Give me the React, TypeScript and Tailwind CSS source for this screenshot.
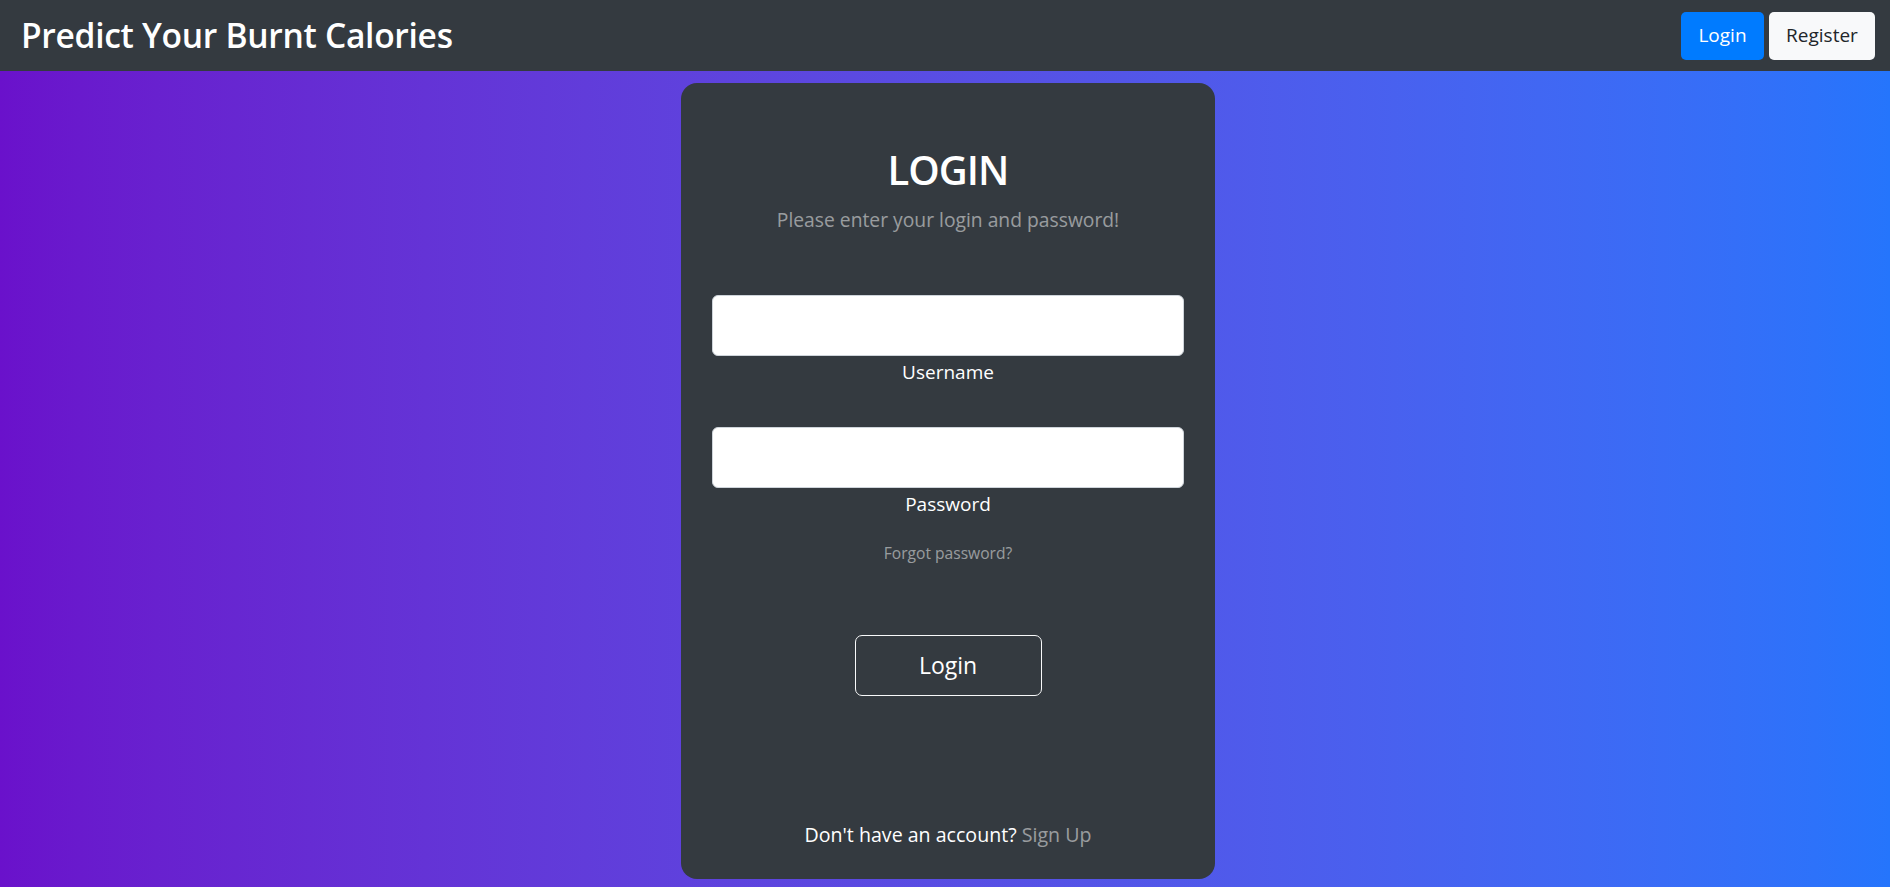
import React from "react";

export default function App() {
  return (
    <div
      className="flex h-screen flex-col overflow-hidden"
      style={{ fontFamily: '"Open Sans", "Noto Sans", sans-serif' }}
    >
      <nav className="flex h-[71px] shrink-0 items-center justify-between bg-[#343a40] pl-[21px] pr-[15px]">
        <span className="text-[33.6px] font-semibold leading-none tracking-[-0.3px] text-white">
          Predict Your Burnt Calories
        </span>
        <div className="flex gap-[5px]">
          <button className="h-[48px] w-[83px] rounded-[5px] bg-[#007bff] text-[19px] text-white">
            Login
          </button>
          <button className="h-[48px] w-[106px] rounded-[5px] bg-[#f8f9fa] text-[19px] text-[#212529]">
            Register
          </button>
        </div>
      </nav>
      <main className="flex flex-1 justify-center bg-gradient-to-r from-[#6a11cb] to-[#2575fc] pl-[6px] pt-[12px]">
        <div className="flex h-[796px] w-[534px] flex-col items-center rounded-2xl bg-[#343a40] px-[31px] pt-[63px] text-center text-white">
          <h2 className="text-[40px] font-semibold leading-[48px] tracking-[-1px]">LOGIN</h2>
          <p className="mt-[11px] text-[19.3px] leading-[30px] text-white/50">
            Please enter your login and password!
          </p>
          <input
            type="text"
            className="mt-[60px] h-[61px] w-full rounded-[6px] border border-[#ced4da] bg-white px-3 text-[20px] text-[#495057] outline-none"
          />
          <label className="mt-px block text-[19px] leading-[30px]">Username</label>
          <input
            type="password"
            className="mt-[40px] h-[61px] w-full rounded-[6px] border border-[#ced4da] bg-white px-3 text-[20px] text-[#495057] outline-none"
          />
          <label className="mt-px block text-[19px] leading-[30px]">Password</label>
          <a className="mt-[22px] block text-[15.6px] leading-[24px] text-white/50">Forgot password?</a>
          <button className="mt-[70px] h-[61px] w-[187px] rounded-[7px] border border-[#f8f9fa] text-[23px] text-white">
            Login
          </button>
          <p className="mt-[124px] text-[19.6px] leading-[30px]">
            Don't have an account? <a className="text-white/50">Sign Up</a>
          </p>
        </div>
      </main>
    </div>
  );
}
